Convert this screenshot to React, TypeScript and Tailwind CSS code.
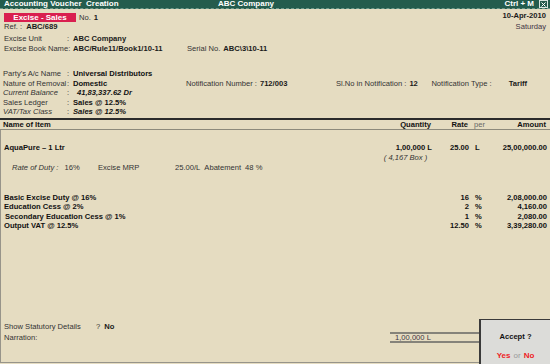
import React from "react";

const Field: React.FC<{
  label: string;
  value: string;
  italic?: boolean;
  indent?: boolean;
  h?: string;
}> = ({ label, value, italic, indent, h }) => {
  return (
    <div className={`flex items-center ${h ?? "h-[9.25px]"}`}>
      <span
        className={`w-[64px] whitespace-nowrap text-[#333] ${italic ? "italic" : ""}`}
      >
        {label}
      </span>
      <span className="w-[6px] text-[#333]">:</span>
      <span
        className={`font-bold text-[#111] whitespace-nowrap ${italic ? "italic" : ""} ${indent ? "pl-[4px]" : ""}`}
      >
        {value}
      </span>
    </div>
  );
};

const Row: React.FC<{
  name: React.ReactNode;
  qty?: React.ReactNode;
  rate?: string;
  per?: React.ReactNode;
  amount?: string;
  h?: string;
  bold?: boolean;
}> = ({ name, qty, rate, per, amount, h, bold }) => {
  return (
    <div
      className={`grid grid-cols-[376px_52px_37px_31px_47px] items-center pl-[3px] pr-[3px] ${h ?? "h-[10px]"} ${bold ? "font-bold text-[#111]" : ""}`}
    >
      <div className="whitespace-nowrap">{name}</div>
      <div className="text-right whitespace-nowrap">{qty}</div>
      <div className="text-right whitespace-nowrap">{rate}</div>
      <div className="pl-[6px] whitespace-nowrap">{per}</div>
      <div className="text-right whitespace-nowrap">{amount}</div>
    </div>
  );
};

export default function App() {
  return (
    <div
      className="relative w-[550px] h-[364px] overflow-hidden bg-[#e5dcc1] text-[7.6px] leading-[10px] text-[#1a1a1a] flex flex-col"
      style={{ fontFamily: '"Liberation Sans", Arial, sans-serif' }}
    >
      {/* title bar */}
      <header className="h-[9px] bg-[#245c4d] border-b border-dashed border-[#6f9a8c] flex items-center text-white font-bold text-[8px] pl-[4px] pr-[2px]">
        <span className="w-[214px] whitespace-nowrap">Accounting Voucher&nbsp; Creation</span>
        <span className="whitespace-nowrap">ABC Company</span>
        <span className="ml-auto whitespace-nowrap">Ctrl + M</span>
        <span className="ml-[5px] w-[9px] h-[8px] border border-[#d8e4df] flex items-center justify-center">
          <svg width="5" height="5" viewBox="0 0 5 5">
            <path d="M0.5 0.5 L4.5 4.5 M4.5 0.5 L0.5 4.5" stroke="#fff" strokeWidth="1" />
          </svg>
        </span>
      </header>

      {/* voucher head */}
      <section className="relative pl-[4px] pr-[4px]">
        <div className="flex items-center h-[9px] mt-[4px]">
          <span className="w-[72px] h-[9px] bg-[#d91f4f] text-white font-bold text-[8px] flex items-center justify-center">
            Excise - Sales
          </span>
          <span className="ml-[3px] text-[#333]">No.</span>
          <span className="ml-[3px] font-bold">1</span>
          <span className="ml-auto font-bold -mt-[3px]">10-Apr-2010</span>
        </div>
        <div className="flex items-center h-[10px]">
          <span className="text-[#333]">Ref. :</span>
          <span className="ml-[4px] font-bold">ABC/689</span>
          <span className="ml-auto text-[#3d3344]">Saturday</span>
        </div>
        <div className="flex items-center h-[10px] mt-[2px]">
          <span className="w-[63px] text-[#333]">Excise Unit</span>
          <span className="w-[6px] text-[#333]">:</span>
          <span className="font-bold">ABC Company</span>
        </div>
        <div className="flex items-center h-[10px]">
          <span className="w-[64px] text-[#333] whitespace-nowrap">Excise Book Name:</span>
          <span className="w-[5px]" />
          <span className="w-[114px] font-bold whitespace-nowrap">ABC/Rule11/Book1/10-11</span>
          <span className="text-[#333]">Serial No.</span>
          <span className="ml-[3px] font-bold whitespace-nowrap">ABC\3\10-11</span>
        </div>
      </section>

      <section className="pl-[3px] mt-[15.5px] h-[47px]">
        <Field label="Party's A/c Name" value="Universal Distributors" />
        <div className="flex items-center">
          <div className="w-[183px]">
            <Field label="Nature of Removal" value="Domestic" />
          </div>
          <span className="text-[#333] whitespace-nowrap">Notification Number :</span>
          <span className="ml-[3px] w-[76px] font-bold">712/003</span>
          <span className="text-[#333] whitespace-nowrap">Sl.No in Notification :</span>
          <span className="ml-[3px] w-[22px] font-bold">12</span>
          <span className="text-[#333] whitespace-nowrap">Notification Type :</span>
          <span className="ml-[17px] font-bold">Tariff</span>
        </div>
        <Field label="Current Balance" value="41,83,337.62 Dr" italic indent />
        <Field label="Sales Ledger" value="Sales @ 12.5%" />
        <Field label="VAT/Tax Class" value="Sales @ 12.5%" italic />
      </section>

      {/* table header */}
      <div className="mt-[1px] border-t-2 border-[#2b2b2b] border-b border-b-[#8d8a7c]">
        <Row
          h="h-[9px]"
          bold
          name="Name of Item"
          qty="Quantity"
          rate="Rate"
          per={<span className="font-normal text-[#666]">per</span>}
          amount="Amount"
        />
      </div>

      {/* table body */}
      <div className="flex-1 flex flex-col border-l border-b border-[#97948a] mb-[1px]">
        <div className="mt-[13px]">
          <Row
            bold
            name="AquaPure – 1 Ltr"
            qty="1,00,000 L"
            rate="25.00"
            per="L"
            amount="25,00,000.00"
          />
          <Row
            name=""
            qty={
              <span className="italic text-[#333] pr-[1px] inline-block w-full text-center">
                ( 4,167 Box )
              </span>
            }
          />
          <div className="flex items-center h-[10px] pl-[11px] text-[#333] whitespace-nowrap">
            <span className="w-[86px] flex shrink-0">
              <span className="italic">Rate of Duty :</span>
              <span className="ml-[6px]">16%</span>
            </span>
            <span className="w-[77px] shrink-0">Excise MRP</span>
            <span>25.00/L</span>
            <span className="ml-[4px]">Abatement</span>
            <span className="ml-[4px]">48 %</span>
          </div>
        </div>

        <div className="mt-[20.5px]">
          <Row h="h-[9.3px]" bold name="Basic Excise Duty @ 16%" rate="16" per="%" amount="2,08,000.00" />
          <Row h="h-[9.3px]" bold name="Education Cess @ 2%" rate="2" per="%" amount="4,160.00" />
          <Row
            h="h-[9.3px]"
            bold
            name={<span className="pl-[1px]">Secondary Education Cess @ 1%</span>}
            rate="1"
            per="%"
            amount="2,080.00"
          />
          <Row h="h-[9.3px]" bold name="Output VAT @ 12.5%" rate="12.50" per="%" amount="3,39,280.00" />
        </div>

        <div className="mt-auto mb-[19px] pl-[3px]">
          <div className="flex items-center h-[10px]">
            <span className="w-[92px] text-[#333]">Show Statutory Details</span>
            <span className="text-[#333]">?</span>
            <span className="ml-[4px] font-bold">No</span>
          </div>
          <div className="flex items-center h-[11px]">
            <span className="w-[386px] text-[#333]">Narration:</span>
            <div className="w-[89px] h-[11px] border-y-2 border-[#85837a] flex items-center pl-[5px] text-[#3d3344]">
              1,00,000 L
            </div>
          </div>
        </div>
      </div>

      {/* accept dialog */}
      <div className="absolute right-0 bottom-0 w-[71px] h-[45px] bg-[#dcdcd9] border-l-2 border-t border-[#3a3a3a] flex flex-col items-center">
        <span className="mt-[12px] font-bold text-[#111]">Accept ?</span>
        <span className="mt-auto mb-[3px] text-[8px]">
          <span className="font-bold text-[#ee1c25]">Yes</span>
          <span className="text-[#9a9a9a] mx-[3px]">or</span>
          <span className="font-bold text-[#ee1c25]">No</span>
        </span>
      </div>
    </div>
  );
}
